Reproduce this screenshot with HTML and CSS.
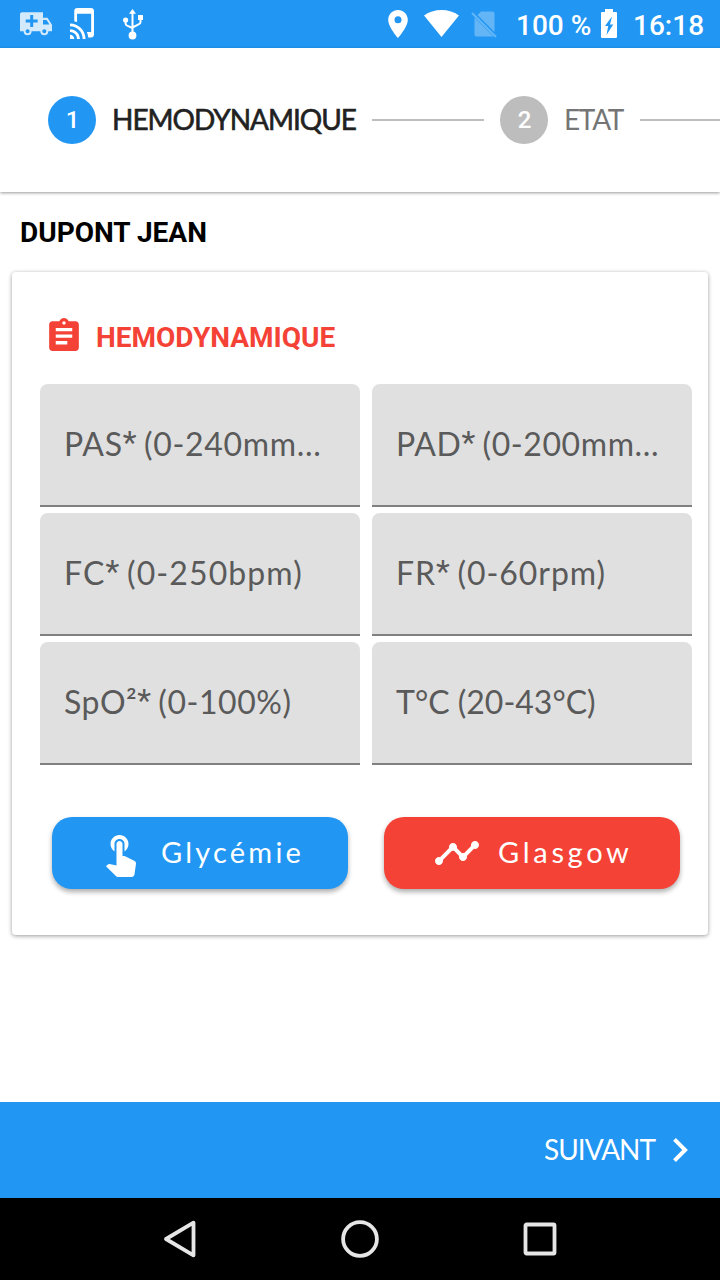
FILE: index.html
```html
<!DOCTYPE html>
<html lang="fr">
<head>
<meta charset="utf-8">
<title>Hemodynamique</title>
<link rel="stylesheet" href="styles.css">
</head>
<body>
<div class="screen">
  <div class="status">
    <svg class="st-amb" viewBox="0 0 32 24"><path fill-rule="evenodd" d="M2 .3h21v5.500h4.500l4.500 7v6.500h-3.700a4 4 0 0 1-8 0h-8.700a4 4 0 0 1-8 0H0v-17a2 2 0 0 1 2-2zM10.200 3v4.500H5.700v3h4.500V15h3v-4.500h4.500v-3h-4.500V3zM23 8v4.500h6.500L26.500 8zM7.600 17.300a2 2 0 1 0 .01 0zM24.300 17.300a2 2 0 1 0 .01 0z"/></svg>
    <svg class="st-cast" viewBox="2 1 17 22"><path d="M2 16v2c2.760 0 5 2.240 5 5h2c0-3.870-3.130-7-7-7zm0 4v3h3c0-1.660-1.340-3-3-3zm0-8v2c4.970 0 9 4.030 9 9h2c0-6.080-4.920-11-11-11zM17 1.010L7 1c-1.100 0-2 .9-2 2v7.370c.69.16 1.360.37 2 .64V5h10v13h-3.030c.52 1.250.84 2.590.95 4H17c1.100 0 2-.9 2-2V3c0-1.100-.9-1.990-2-1.990z"/></svg>
    <svg class="st-usb" viewBox="0 0 20 31"><path d="M9.500 0l3.500 4.800H6z"/><circle cx="9.500" cy="26.500" r="3.900"/><circle cx="2.600" cy="11" r="2.600"/><path d="M15 6h5v5h-5z"/><path class="line" d="M9.500 3v22M2.600 11v3.500q0 1.500 1.500 2.200L9.500 19M17.500 9v4q0 1.500-1.500 2.200L9.500 18.500"/></svg>
    <svg class="st-pin" viewBox="5 2 14 20"><path d="M12 2C8.130 2 5 5.130 5 9c0 5.250 7 13 7 13s7-7.750 7-13c0-3.870-3.130-7-7-7zm0 9.500a2.500 2.500 0 1 1 0-5 2.500 2.500 0 0 1 0 5z"/></svg>
    <svg class="st-wifi" viewBox="0 0 35 27"><path d="M17.500 27L0 5.500Q7.500 0 17.500 0T35 5.500z"/></svg>
    <svg class="st-sim" viewBox="0 0 26 28"><path d="M10 1.500h11.500a2 2 0 0 1 2 2V22L6.500 5zM3.500 7.500L22.500 26.500H5.500a2 2 0 0 1-2-2z"/><path class="line" d="M1 3l24 24"/></svg>
    <span class="st-text st-batt-text">100 %</span>
    <svg class="st-batt" viewBox="0 0 16 29"><path fill-rule="evenodd" d="M4 0h8v3h3a1 1 0 0 1 1 1v24a1 1 0 0 1-1 1H1a1 1 0 0 1-1-1V4a1 1 0 0 1 1-1h3zM11 7.500L4 17h3.200L5.500 26l6.700-10.500H9z"/></svg>
    <span class="st-text">16:18</span>
  </div>
  <div class="stepper">
    <span class="badge active">1</span>
    <span class="step current">HEMODYNAMIQUE</span>
    <i class="rule"></i>
    <span class="badge">2</span>
    <span class="step next">ETAT</span>
    <i class="rule"></i>
  </div>
  <main>
    <h1 class="patient">DUPONT JEAN</h1>
    <section class="card">
      <h2 class="title"><svg viewBox="3 1 18 20"><path d="M19 3h-4.180C14.400 1.840 13.300 1 12 1c-1.300 0-2.400.84-2.820 2H5c-1.100 0-2 .9-2 2v14c0 1.100.9 2 2 2h14c1.100 0 2-.9 2-2V5c0-1.100-.9-2-2-2zm-7 0c.55 0 1 .45 1 1s-.45 1-1 1-1-.45-1-1 .45-1 1-1zm2 14H7v-2h7v2zm3-4H7v-2h10v2zm0-4H7V7h10v2z"/></svg><span>HEMODYNAMIQUE</span></h2>
      <div class="fields">
        <div class="field pas"><span>PAS<b>*</b> (0-240mm...</span></div>
        <div class="field pad"><span>PAD<b>*</b> (0-200mm...</span></div>
        <div class="field fc"><span>FC<b>*</b> (0-250bpm)</span></div>
        <div class="field fr"><span>FR<b>*</b> (0-60rpm)</span></div>
        <div class="field spo"><span>SpO²<b>*</b> (0-100%)</span></div>
        <div class="field temp"><span>T°C (20-43°C)</span></div>
      </div>
      <div class="actions">
        <button class="btn blue"><svg class="touch" viewBox="4.75 3 15 21"><path d="M9 11.240V7.500C9 6.120 10.120 5 11.500 5S14 6.120 14 7.500v3.740c1.210-.81 2-2.180 2-3.740C16 5.010 13.990 3 11.500 3S7 5.010 7 7.500c0 1.560.79 2.930 2 3.740zm9.840 4.630l-4.540-2.260c-.17-.07-.35-.11-.54-.11H13v-6c0-.83-.67-1.500-1.500-1.500S10 6.670 10 7.500v10.740l-3.430-.72c-.08-.01-.15-.03-.24-.03-.31 0-.59.13-.79.33l-.79.8 4.940 4.940c.27.27.65.44 1.060.44h6.790c.75 0 1.330-.55 1.440-1.280l.75-5.270c.01-.07.02-.14.02-.2 0-.62-.38-1.160-.91-1.380z"/></svg><span>Glycémie</span></button>
        <button class="btn red"><svg class="trend" viewBox="1 6 22 12"><path d="M23 8c0 1.100-.9 2-2 2-.18 0-.35-.02-.51-.07l-3.560 3.550c.05.16.07.34.07.52 0 1.100-.9 2-2 2s-2-.9-2-2c0-.18.02-.36.07-.52l-2.550-2.550c-.16.05-.34.07-.52.07s-.36-.02-.52-.07l-4.550 4.560c.05.16.07.33.07.51 0 1.100-.9 2-2 2s-2-.9-2-2 .9-2 2-2c.18 0 .35.02.51.07l4.560-4.550C8.020 9.360 8 9.180 8 9c0-1.100.9-2 2-2s2 .9 2 2c0 .18-.02.36-.07.52l2.550 2.550c.16-.05.34-.07.52-.07s.36.02.52.07l3.550-3.560C19.020 8.350 19 8.180 19 8c0-1.100.9-2 2-2s2 .9 2 2z"/></svg><span>Glasgow</span></button>
      </div>
    </section>
  </main>
  <div class="next-bar"><span>SUIVANT</span><svg viewBox="8.590 6 7.410 12"><path d="M10 6L8.590 7.410 13.170 12l-4.580 4.590L10 18l6-6z"/></svg></div>
  <div class="nav">
    <svg class="back" viewBox="0 0 34 40"><path d="M3 20L30.500 3.700v32.600z"/></svg>
    <svg class="home" viewBox="0 0 40 40"><circle cx="20" cy="20" r="16.900"/></svg>
    <svg class="recent" viewBox="0 0 40 40"><rect x="5.500" y="5.500" width="29" height="29" rx="1"/></svg>
  </div>
</div>
</body>
</html>
```
FILE: styles.css
```css
* { box-sizing: border-box; }
body { margin: 0; background: #fff; font-family: Lato, "Open Sans", sans-serif; }
.screen { display: flex; flex-direction: column; width: 720px; height: 1280px; overflow: hidden; }
svg { display: block; flex: none; fill: currentColor; }

.status { display: flex; align-items: flex-start; height: 48px; padding-left: 20px; background: #2196f3; color: #fff; flex: none; }
.st-amb { width: 32px; height: 24px; margin-top: 12px; opacity: .8; }
.st-cast { width: 24px; height: 31px; margin: 8px 0 0 18px; }
.st-usb { width: 20px; height: 31px; margin: 9px 0 0 29px; }
.st-pin { width: 20px; height: 28px; margin: 10px 0 0 245px; }
.st-wifi { width: 35px; height: 27px; margin: 10px 0 0 16px; }
.st-sim { width: 26px; height: 28px; margin: 10px 0 0 12px; opacity: .3; }
.line { fill: none; stroke: currentColor; stroke-width: 2; }
.st-text { font: 500 28px/48px Roboto, sans-serif; margin-top: 2px; height: 46px; }
.st-batt-text { margin-left: 19px; width: 85px; white-space: nowrap; }
.st-batt { width: 16px; height: 29px; margin: 9px 16px 0 0; }

.stepper { display: flex; align-items: center; flex: none; height: 144px; padding-left: 48px; background: #fff; box-shadow: 0 1px 3px rgba(0,0,0,.4); font-size: 28px; line-height: 40px; }
.badge { flex: none; width: 48px; height: 48px; padding-left: 1px; border-radius: 50%; background: #bdbdbd; color: #fff; font: 500 24px/49px Roboto, sans-serif; text-align: center; }
.badge.active { background: #2196f3; }
.step { flex: none; margin-left: 16px; padding-bottom: 2px; color: #212121; letter-spacing: -1px; white-space: nowrap; }
.current { width: 244px; -webkit-text-stroke: .6px #212121; }
.next { width: 60px; color: #757575; letter-spacing: -1.3px; }
.rule { flex: none; width: 112px; height: 2px; margin: 0 16px; background: #bdbdbd; }

main { flex: 1; padding: 0 12px; }
.patient { margin: 20px 8px 19px; font: 700 28px/41px Roboto, sans-serif; color: #000; }
.card { height: 663px; padding: 32px 16px 0 28px; border-radius: 4px; background: #fff; box-shadow: 0 1px 4px rgba(0,0,0,.4); }
.title { display: flex; align-items: center; height: 66px; margin: 0 0 14px; padding-left: 9px; color: #f44336; font: 700 28px/66px Roboto, sans-serif; }
.title span { padding-top: 2px; }
.title svg { width: 30px; height: 33px; margin: 0 17px 6px 0; }
.fields { display: grid; grid-template-columns: 320px 320px; grid-auto-rows: 123px; gap: 6px 12px; }
.field { display: flex; align-items: center; padding: 0 0 2px 24px; border-bottom: 2px solid #808080; border-radius: 8px 8px 0 0; background: #e0e0e0; color: #5a5a5a; font-size: 32px; line-height: 38px; white-space: nowrap; }
.field b { font: 400 32px/20px Roboto, sans-serif; letter-spacing: -1.5px; vertical-align: 3px; }
.field.pas { letter-spacing: .7px; }
.field.pad { letter-spacing: .6px; }
.field.fc { letter-spacing: 1.1px; }
.field.fr { letter-spacing: .95px; }
.field.spo { letter-spacing: .55px; }
.actions { display: flex; gap: 36px; margin: 52px 0 0 12px; }
.btn { display: flex; align-items: center; width: 296px; height: 72px; padding: 0; border: 0; border-radius: 20px; color: #fff; font: 29px/70px Lato, sans-serif; box-shadow: 0 3px 5px rgba(0,0,0,.32); }
.btn span { padding-bottom: 2px; white-space: nowrap; }
.blue { background: #2196f3; letter-spacing: 3.2px; }
.red { background: #f44336; letter-spacing: 3.7px; }
.touch { width: 30px; height: 42px; margin: 6px 25px 0 54px; }
.trend { width: 44px; height: 24px; margin: 0 19px 0 51px; }

.next-bar { display: flex; align-items: center; justify-content: flex-end; flex: none; height: 96px; padding-right: 32px; background: #2196f3; color: #fff; font-size: 28px; letter-spacing: -1px; }
.next-bar span { padding-bottom: 2px; }
.next-bar svg { width: 15px; height: 24px; margin-left: 18px; }
.nav { display: flex; align-items: center; flex: none; height: 82px; padding-left: 163px; background: #000; color: #e6e6e6; }
.nav svg { height: 40px; fill: none; stroke: currentColor; stroke-width: 3.8; stroke-linejoin: round; }
.back { width: 34px; }
.home { width: 40px; margin-left: 143px; }
.recent { width: 40px; margin-left: 140px; }
```
